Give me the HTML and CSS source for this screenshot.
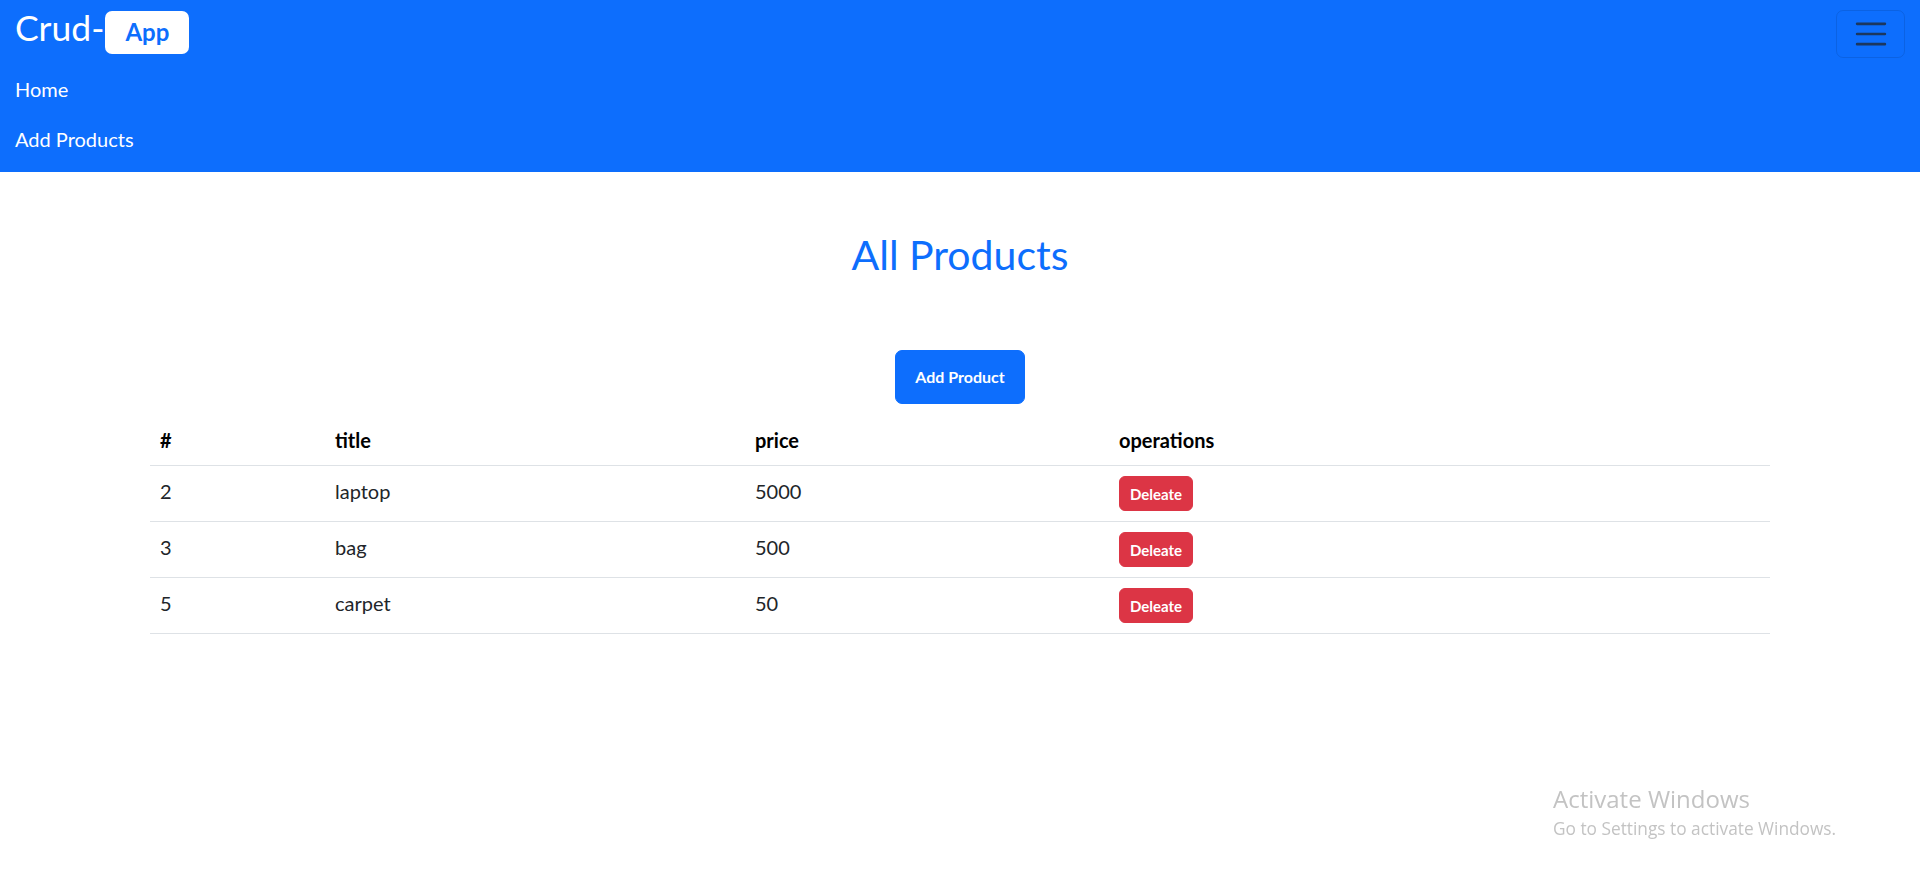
FILE: index.html
```html
<!DOCTYPE html>
<html lang="en">
<head>
<meta charset="utf-8">
<title>Crud-App</title>
<link rel="stylesheet" href="styles.css">
</head>
<body>
<nav class="navbar">
  <div class="navbar-top">
    <a class="brand" href="#"><span class="brand-text">Crud-</span><span class="badge">App</span></a>
    <button class="toggler" type="button" aria-label="Toggle navigation">
      <svg class="toggler-icon" viewBox="0 0 30 30" width="38" height="38" aria-hidden="true">
        <path d="M4 7h22M4 15h22M4 23h22" stroke="rgba(33,37,41,0.75)" stroke-width="2" stroke-linecap="round" fill="none"/>
      </svg>
    </button>
  </div>
  <ul class="nav-list">
    <li><a class="nav-link" href="#">Home</a></li>
    <li><a class="nav-link" href="#">Add Products</a></li>
  </ul>
</nav>

<main class="main">
  <h1 class="page-title">All Products</h1>
  <div class="actions">
    <button class="btn btn-primary" type="button">Add Product</button>
  </div>
  <table class="table">
    <thead>
      <tr>
        <th class="c-id">#</th>
        <th class="c-title">title</th>
        <th class="c-price">price</th>
        <th>operations</th>
      </tr>
    </thead>
    <tbody>
      <tr>
        <td>2</td>
        <td>laptop</td>
        <td>5000</td>
        <td class="td-ops"><button class="btn btn-danger" type="button">Deleate</button></td>
      </tr>
      <tr>
        <td>3</td>
        <td>bag</td>
        <td>500</td>
        <td class="td-ops"><button class="btn btn-danger" type="button">Deleate</button></td>
      </tr>
      <tr>
        <td>5</td>
        <td>carpet</td>
        <td>50</td>
        <td class="td-ops"><button class="btn btn-danger" type="button">Deleate</button></td>
      </tr>
    </tbody>
  </table>
</main>

<div class="watermark">
  <div class="wm-title">Activate Windows</div>
  <div class="wm-sub">Go to Settings to activate Windows.</div>
</div>
</body>
</html>
```

FILE: styles.css
```css
* {
  box-sizing: border-box;
}

html, body {
  margin: 0;
  padding: 0;
  background: #ffffff;
}

body {
  font-family: "Lato", "Open Sans", sans-serif;
  font-size: 20px;
  line-height: 1.5;
  color: #212529;
}

/* Navbar */
.navbar {
  background: #0d6efd;
  padding: 10px 15px 8px 15px;
}

.navbar-top {
  display: flex;
  justify-content: space-between;
  align-items: flex-start;
}

.brand {
  display: flex;
  align-items: baseline;
  color: #ffffff;
  text-decoration: none;
  font-size: 35.5px;
  line-height: 1;
}

.brand-text {
  display: inline-block;
}

.badge {
  display: inline-block;
  background: #ffffff;
  color: #0d6efd;
  font-weight: 700;
  font-size: 24px;
  line-height: 1;
  padding: 9.5px 20px 9.5px 20px;
  border-radius: 7px;
  margin-left: 1px;
}

.toggler {
  width: 69px;
  height: 48px;
  padding: 0;
  display: flex;
  align-items: center;
  justify-content: center;
  background: transparent;
  border: 1px solid rgba(0, 0, 0, 0.1);
  border-radius: 7px;
  cursor: pointer;
}

.toggler-icon {
  display: block;
}

.nav-list {
  list-style: none;
  margin: 6px 0 0 0;
  padding: 0;
}

.nav-link {
  display: block;
  color: #ffffff;
  text-decoration: none;
  font-size: 20px;
  line-height: 30px;
  padding: 10px 0;
}

/* Main */
.main {
  padding: 0 150px;
}

.page-title {
  margin: 58px 0 0 0;
  text-align: center;
  color: #0d6efd;
  font-size: 41px;
  font-weight: 400;
  line-height: 1.2;
}

.actions {
  display: flex;
  justify-content: center;
  margin-top: 71px;
  margin-bottom: 11px;
}

.btn {
  font-family: "Lato", sans-serif;
  font-weight: 700;
  color: #ffffff;
  border: 1px solid transparent;
  cursor: pointer;
}

.btn-primary {
  background: #0d6efd;
  border-color: #0d6efd;
  font-size: 16px;
  line-height: 22px;
  padding: 15px 19px;
  border-radius: 7px;
}

.btn-danger {
  background: #dc3545;
  border-color: #dc3545;
  font-size: 15px;
  line-height: 22px;
  height: 35px;
  padding: 5px 10px;
  border-radius: 6px;
  display: block;
}

/* Table */
.table {
  width: 100%;
  border-collapse: collapse;
  table-layout: fixed;
}

.table th,
.table td {
  text-align: left;
  padding: 10px;
  border-bottom: 1px solid #dee2e6;
  vertical-align: middle;
  line-height: 30px;
}

.table td {
  padding: 7px 10px 12px 10px;
}

.table td.td-ops {
  padding: 10px;
}

.table th {
  color: #000000;
  font-weight: 700;
}

.c-id {
  width: 175px;
}

.c-title {
  width: 420px;
}

.c-price {
  width: 364px;
}

/* OS watermark overlay */
.watermark {
  position: fixed;
  left: 1553px;
  top: 785px;
  color: #c3c3c3;
  font-family: "Open Sans", sans-serif;
  pointer-events: none;
}

.wm-title {
  font-size: 24px;
  line-height: 1.2;
}

.wm-sub {
  font-size: 17.3px;
  line-height: 1.2;
  margin-top: 5px;
}
```
